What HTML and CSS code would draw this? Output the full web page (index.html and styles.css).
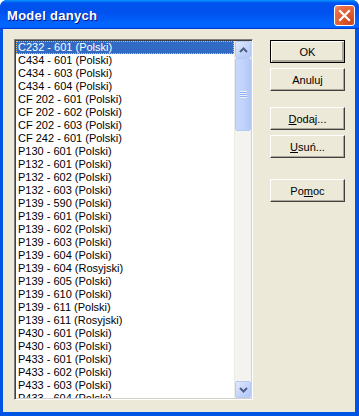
FILE: index.html
```html
<!DOCTYPE html>
<html lang="pl">
<head>
    <meta charset="UTF-8">
    <title>Model danych</title>
    <link rel="stylesheet" href="styles.css">
</head>
<body>
    <div class="window">
        <div class="title-bar">
            <span class="title">Model danych</span>
            <div class="close-btn">
                <svg width="13" height="13" viewBox="0 0 13 13">
                    <path d="M2 2 L11 11 M11 2 L2 11" stroke="#fff" stroke-width="2.2" stroke-linecap="square"/>
                </svg>
            </div>
        </div>
        <div class="client">
            <div class="listbox">
                <div class="items">
                    <div class="item selected"><span>C232 - 601 (Polski)</span></div>
                    <div class="item">C434 - 601 (Polski)</div>
                    <div class="item">C434 - 603 (Polski)</div>
                    <div class="item">C434 - 604 (Polski)</div>
                    <div class="item">CF 202 - 601 (Polski)</div>
                    <div class="item">CF 202 - 602 (Polski)</div>
                    <div class="item">CF 202 - 603 (Polski)</div>
                    <div class="item">CF 242 - 601 (Polski)</div>
                    <div class="item">P130 - 601 (Polski)</div>
                    <div class="item">P132 - 601 (Polski)</div>
                    <div class="item">P132 - 602 (Polski)</div>
                    <div class="item">P132 - 603 (Polski)</div>
                    <div class="item">P139 - 590 (Polski)</div>
                    <div class="item">P139 - 601 (Polski)</div>
                    <div class="item">P139 - 602 (Polski)</div>
                    <div class="item">P139 - 603 (Polski)</div>
                    <div class="item">P139 - 604 (Polski)</div>
                    <div class="item">P139 - 604 (Rosyjski)</div>
                    <div class="item">P139 - 605 (Polski)</div>
                    <div class="item">P139 - 610 (Polski)</div>
                    <div class="item">P139 - 611 (Polski)</div>
                    <div class="item">P139 - 611 (Rosyjski)</div>
                    <div class="item">P430 - 601 (Polski)</div>
                    <div class="item">P430 - 603 (Polski)</div>
                    <div class="item">P433 - 601 (Polski)</div>
                    <div class="item">P433 - 602 (Polski)</div>
                    <div class="item">P433 - 603 (Polski)</div>
                    <div class="item">P433 - 604 (Polski)</div>
                </div>
                <div class="scrollbar">
                    <div class="sb-btn">
                        <svg width="9" height="6" viewBox="0 0 9 6"><path d="M1 5 L4.5 1.5 L8 5" fill="none" stroke="#4d6185" stroke-width="2"/></svg>
                    </div>
                    <div class="sb-thumb">
                        <div class="grip"></div>
                    </div>
                    <div class="sb-track"></div>
                    <div class="sb-btn">
                        <svg width="9" height="6" viewBox="0 0 9 6"><path d="M1 1 L4.5 4.5 L8 1" fill="none" stroke="#4d6185" stroke-width="2"/></svg>
                    </div>
                </div>
            </div>
            <div class="buttons">
                <button class="btn default">OK</button>
                <button class="btn">Anuluj</button>
                <button class="btn gap-top"><u>D</u>odaj...</button>
                <button class="btn"><u>U</u>suń...</button>
                <button class="btn gap-big">Po<u>m</u>oc</button>
            </div>
        </div>
    </div>
</body>
</html>
```

FILE: styles.css
```css
body {
    margin: 0;
    background: #fff;
    font-family: "Liberation Sans", Arial, sans-serif;
}
.window {
    width: 359px;
    height: 416px;
    box-sizing: border-box;
    display: flex;
    flex-direction: column;
    background: #0054e3;
    border-radius: 7px 7px 0 0;
    overflow: hidden;
}
.title-bar {
    height: 29px;
    flex: none;
    display: flex;
    align-items: center;
    justify-content: space-between;
    padding: 0 4px 0 7px;
    background: linear-gradient(#0997ff 0, #0053ee 10%, #0050ee 40%, #0066ff 85%, #0066ff 92%, #005bff 95%, #003dd7 97%, #003dd7);
}
.title {
    color: #fff;
    font-family: "Liberation Sans", Arial, sans-serif;
    font-weight: bold;
    font-size: 13px;
    letter-spacing: 0.3px;
    text-shadow: 1px 1px #0f1089;
    margin-top: 1px;
}
.close-btn {
    width: 21px;
    height: 21px;
    box-sizing: border-box;
    border: 1px solid #fff;
    border-radius: 3px;
    background: radial-gradient(circle at 80% 85%, #cc4622 0, #e0592c 40%, #e8714a 80%, #f19a7a 100%);
    display: flex;
    align-items: center;
    justify-content: center;
    margin-top: 1px;
}
.client {
    flex: 1;
    display: flex;
    margin: 0 4px 4px 3px;
    padding: 10px 10px 12px 11px;
    background: #ece9d8;
    gap: 17px;
}
.listbox {
    width: 239px;
    height: 361px;
    box-sizing: border-box;
    display: flex;
    background: #fff;
    border: 1px solid;
    border-color: #808080 #fff #fff #808080;
    box-shadow: inset 1px 1px #404040, inset -1px -1px #d4d0c8;
    padding: 1px;
    overflow: hidden;
}
.items {
    flex: 1;
    overflow: hidden;
    font-size: 11px;
    color: #000;
}
.item {
    height: 13px;
    line-height: 13px;
    padding-left: 2px;
    white-space: nowrap;
}
.item.selected {
    background: #316ac5;
    color: #fff;
    outline: 1px dotted #f0c060;
    outline-offset: -1px;
}
.scrollbar {
    width: 17px;
    flex: none;
    display: flex;
    flex-direction: column;
    background: #f4f3ee;
    border-left: 1px solid #eeede5;
    box-sizing: border-box;
}
.sb-btn {
    height: 17px;
    flex: none;
    box-sizing: border-box;
    border: 1px solid #b7caf5;
    border-radius: 2px;
    background: linear-gradient(135deg, #e1eafe, #c1d3fb 60%, #b4c8f6);
    display: flex;
    align-items: center;
    justify-content: center;
}
.sb-thumb {
    height: 73px;
    flex: none;
    box-sizing: border-box;
    border: 1px solid #b7caf5;
    border-radius: 2px;
    background: linear-gradient(90deg, #c9d8fc, #c1d3fb 50%, #b4c8f6);
    display: flex;
    align-items: center;
    justify-content: center;
}
.grip {
    width: 7px;
    height: 7px;
    background: repeating-linear-gradient(#eef4fe 0, #eef4fe 1px, #8cb0f8 1px, #8cb0f8 2px);
}
.sb-track {
    flex: 1;
}
.buttons {
    display: flex;
    flex-direction: column;
    gap: 5px;
    margin-top: 1px;
}
.btn {
    width: 75px;
    height: 23px;
    box-sizing: border-box;
    padding: 0;
    font-family: "Liberation Sans", Arial, sans-serif;
    font-size: 11px;
    color: #000;
    background: #ece9d8;
    border: 1px solid;
    border-color: #fff #404040 #404040 #fff;
    box-shadow: inset -1px -1px #aca899;
}
.btn.default {
    border: 1px solid #000;
    box-shadow: inset 1px 1px #fff, inset -2px -2px #aca899;
}
.gap-top {
    margin-top: 11px;
}
.gap-big {
    margin-top: 16px;
}
```
